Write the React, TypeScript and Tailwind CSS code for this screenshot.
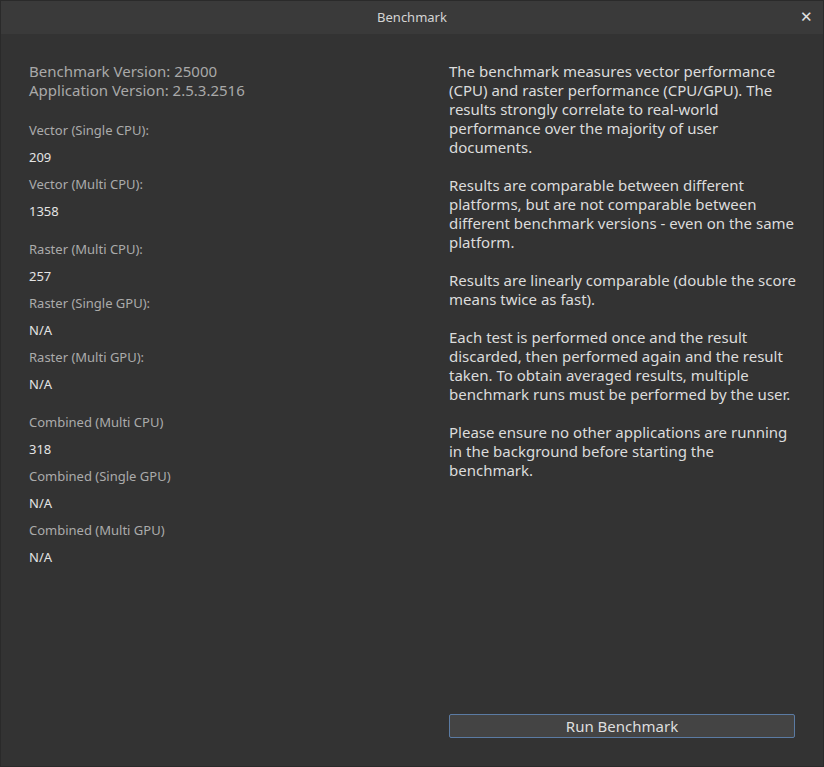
import React from "react";

const results = [
  [
    { label: "Vector (Single CPU):", value: "209" },
    { label: "Vector (Multi CPU):", value: "1358" },
  ],
  [
    { label: "Raster (Multi CPU):", value: "257" },
    { label: "Raster (Single GPU):", value: "N/A" },
    { label: "Raster (Multi GPU):", value: "N/A" },
  ],
  [
    { label: "Combined (Multi CPU)", value: "318" },
    { label: "Combined (Single GPU)", value: "N/A" },
    { label: "Combined (Multi GPU)", value: "N/A" },
  ],
];

const paragraphs = [
  [
    "The benchmark measures vector performance",
    "(CPU) and raster performance (CPU/GPU). The",
    "results strongly correlate to real-world",
    "performance over the majority of user",
    "documents.",
  ],
  [
    "Results are comparable between different",
    "platforms, but are not comparable between",
    "different benchmark versions - even on the same",
    "platform.",
  ],
  ["Results are linearly comparable (double the score", "means twice as fast)."],
  [
    "Each test is performed once and the result",
    "discarded, then performed again and the result",
    "taken. To obtain averaged results, multiple",
    "benchmark runs must be performed by the user.",
  ],
  [
    "Please ensure no other applications are running",
    "in the background before starting the",
    "benchmark.",
  ],
];

export default function App() {
  return (
    <div
      className="w-[824px] h-[767px] flex flex-col bg-[#333333] border border-[#2a2a2a] overflow-hidden"
      style={{ fontFamily: '"Noto Sans", "Open Sans", sans-serif' }}
    >
      {/* Title bar */}
      <div className="h-[33px] shrink-0 bg-[#3a3a3a] flex items-center justify-center relative">
        <span className="text-[13px] text-[#d4d4d4]">Benchmark</span>
        <span className="absolute right-[10px] top-[8px] text-[15px] leading-none text-[#e0e0e0]">✕</span>
      </div>

      <div className="flex-1 flex px-[28px] pt-[28px] pb-[28px]">
        {/* Left column */}
        <div className="w-[420px] flex flex-col">
          <div className="text-[15px] leading-[19px] text-[#a9a9a9] whitespace-nowrap">
            <div>Benchmark Version: 25000</div>
            <div>Application Version: 2.5.3.2516</div>
          </div>
          <div className="flex flex-col gap-[11px] mt-[17px]">
            {results.map((group, gi) => (
              <div key={gi} className="flex flex-col">
                {group.map((r) => (
                  <div key={r.label} className="flex flex-col">
                    <div className="h-[27px] flex items-center text-[13px] text-[#ababab]">{r.label}</div>
                    <div className="h-[27px] flex items-center text-[13px] text-[#e4e4e4]">{r.value}</div>
                  </div>
                ))}
              </div>
            ))}
          </div>
        </div>

        {/* Right column */}
        <div className="w-[346px] flex flex-col">
          <div className="flex flex-col gap-[19px] text-[15px] leading-[19px] text-[#dcdcdc] whitespace-nowrap">
            {paragraphs.map((p, i) => (
              <p key={i}>
                {p.map((line, j) => (
                  <React.Fragment key={j}>
                    {line}
                    {j < p.length - 1 && <br />}
                  </React.Fragment>
                ))}
              </p>
            ))}
          </div>
          <div className="flex-1" />
          <button className="h-[24px] w-full border border-[#5b7ba3] rounded-[2px] bg-[#444444] text-[15px] leading-none text-[#dedede]">
            Run Benchmark
          </button>
        </div>
      </div>
    </div>
  );
}
